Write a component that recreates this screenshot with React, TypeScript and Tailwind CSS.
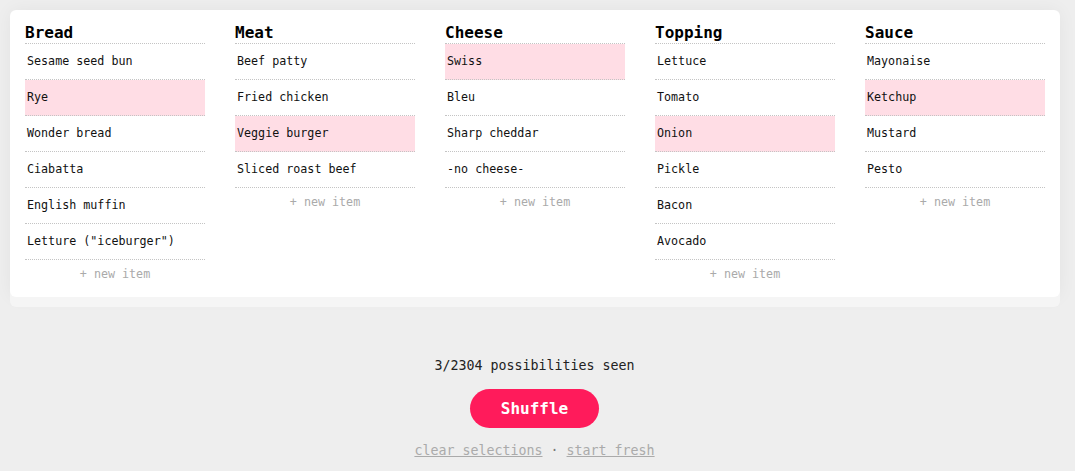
import { useState } from 'react'

const COLUMNS: { title: string; items: string[]; selected: number }[] = [
  {
    title: 'Bread',
    items: ['Sesame seed bun', 'Rye', 'Wonder bread', 'Ciabatta', 'English muffin', 'Letture ("iceburger")'],
    selected: 1,
  },
  { title: 'Meat', items: ['Beef patty', 'Fried chicken', 'Veggie burger', 'Sliced roast beef'], selected: 2 },
  { title: 'Cheese', items: ['Swiss', 'Bleu', 'Sharp cheddar', '-no cheese-'], selected: 0 },
  { title: 'Topping', items: ['Lettuce', 'Tomato', 'Onion', 'Pickle', 'Bacon', 'Avocado'], selected: 2 },
  { title: 'Sauce', items: ['Mayonaise', 'Ketchup', 'Mustard', 'Pesto'], selected: 1 },
]

const mono = "font-['DejaVu_Sans_Mono','Liberation_Mono',monospace]"

function Column({ title, items, selected }: { title: string; items: string[]; selected: number }) {
  const [sel, setSel] = useState(selected)
  return (
    <div className="w-[180px]">
      <h2 className="h-[20px] leading-[20px] text-[16px] font-bold text-black border-b border-dotted border-[#c4c4c4] box-content">
        {title}
      </h2>
      <ul>
        {items.map((item, i) => (
          <li
            key={item}
            onClick={() => setSel(i)}
            className={`h-[35px] box-content flex items-center pl-[2px] text-[11.7px] text-[#111] border-b border-dotted border-[#c4c4c4] cursor-pointer ${
              i === sel ? 'bg-[#ffdde5]' : ''
            }`}
          >
            {item}
          </li>
        ))}
      </ul>
      <div className="h-[30px] flex items-center justify-center text-[11.7px] text-[#aaaaaa]">+ new item</div>
    </div>
  )
}

export default function App() {
  return (
    <div className={`min-h-screen bg-[#eeeeee] p-[10px] ${mono}`}>
      <div className="w-[1050px] bg-white rounded-[6px] px-[15px] pt-[13px] pb-[7px] flex gap-[30px] shadow-[0_10px_0_#f5f5f5,0_0_18px_rgba(0,0,0,0.05)]">
        {COLUMNS.map((c) => (
          <Column key={c.title} {...c} />
        ))}
      </div>

      <div className="flex flex-col items-center mt-[59px] mr-[6px]">
        <p className="text-[13.3px] leading-[20px] text-[#222]">3/2304 possibilities seen</p>
        <button className="mt-[13px] w-[129px] h-[39px] rounded-full bg-[#ff1b5b] text-white font-bold text-[16px]">
          Shuffle
        </button>
        <div className="mt-[13px] text-[13.3px] leading-[20px] text-[#777]">
          <a className="text-[#aaaaaa] underline cursor-pointer">clear selections</a>
          {' · '}
          <a className="text-[#aaaaaa] underline cursor-pointer">start fresh</a>
        </div>
      </div>
    </div>
  )
}
